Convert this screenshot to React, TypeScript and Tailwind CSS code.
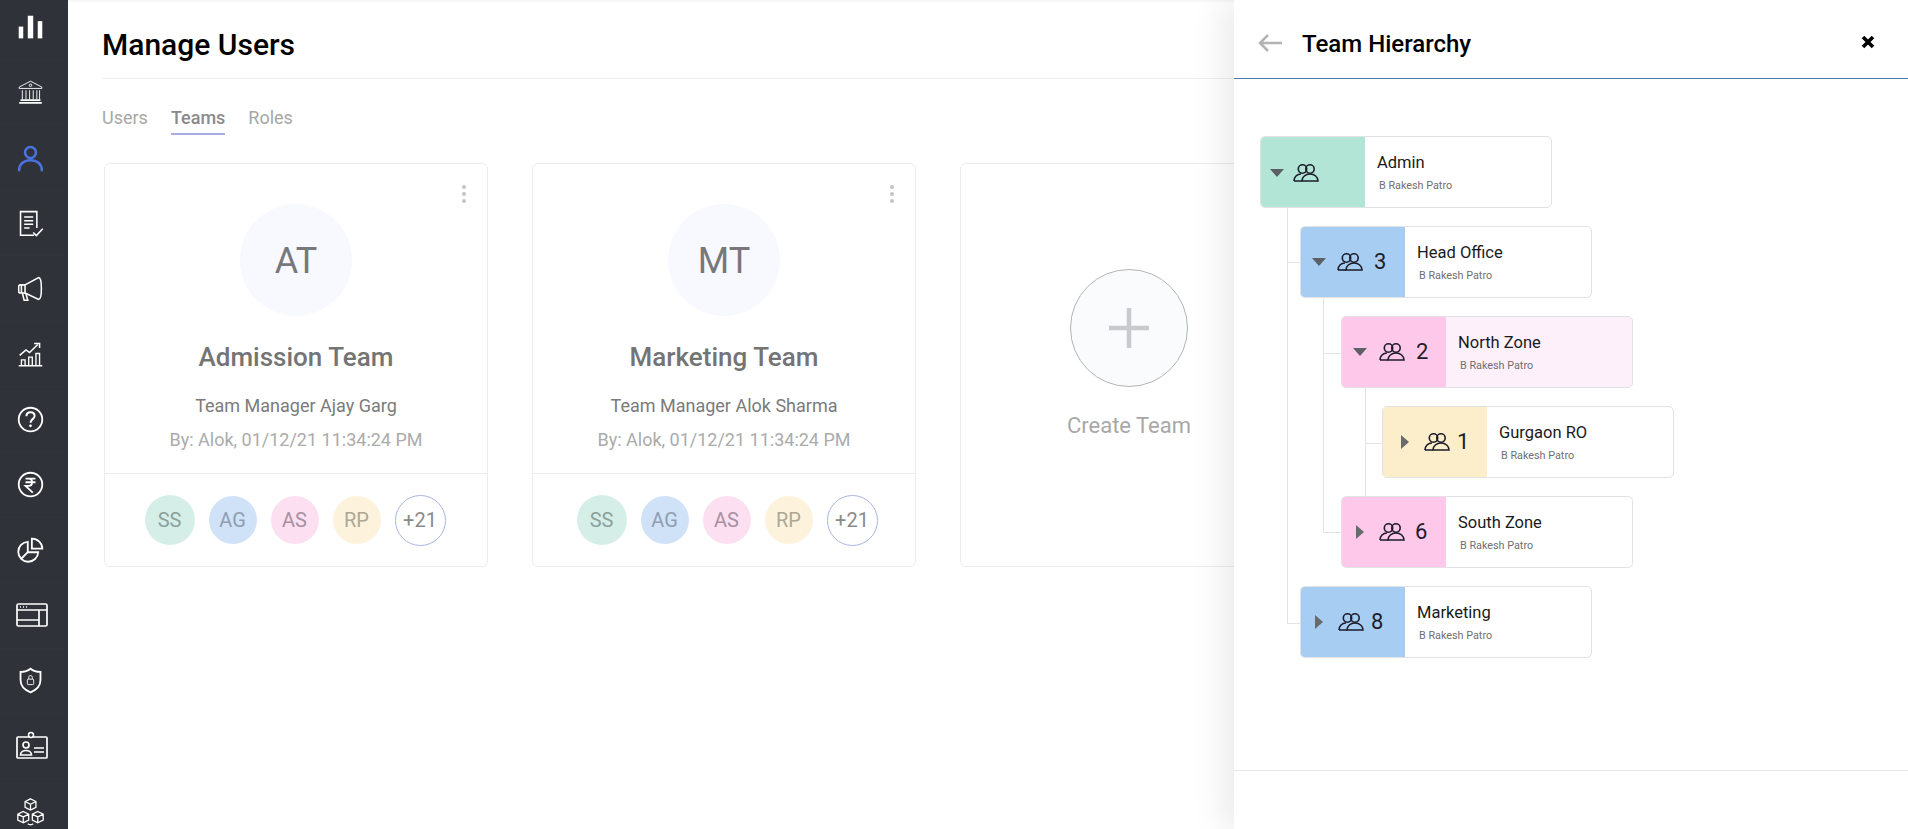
import type { ReactNode } from "react";

// Sidebar icons, all drawn on a 32 box
const sideIcons: ReactNode[] = [
  <>
    <rect x="3" y="15" width="5" height="13" fill="#fff" stroke="none" />
    <rect x="13" y="3" width="6" height="25" fill="#fff" stroke="none" />
    <rect x="24" y="9" width="5" height="19" fill="#fff" stroke="none" />
  </>,
  <>
    <path d="M16 3.5 28.5 10v1.5h-25V10z" />
    <circle cx="16" cy="8" r="1.4" />
    <path d="M7 13.5v10M11 13.5v10M15 13.5v10M19 13.5v10M23 13.5v10M26 13.5v10" />
    <path d="M5 24.5h22M3.5 27.5h25" strokeWidth="2" />
  </>,
  <>
    <circle cx="16" cy="10.500" r="6" strokeWidth="2.800" />
    <path d="M3.500 30c0-7 5.500-11 12.500-11s12.500 4 12.500 11" strokeWidth="2.800" strokeLinecap="round" />
  </>,
  <>
    <path d="M20 30H5V4h18v18" strokeWidth="1.700" />
    <path d="M9 10h10M9 14h10M9 18h10M9 22h6" strokeWidth="1.700" />
    <path d="m19 27 3.500 3.500L29.500 23" strokeWidth="1.700" />
  </>,
  <>
    <path d="M10 12 25 4c2 0 3 5 3 12s-1 12-3 12L10 21z" strokeWidth="1.700" />
    <path d="M10 12H5a2 2 0 0 0-2 2v5a2 2 0 0 0 2 2h5" strokeWidth="1.700" />
    <path d="M6 12v9M7 21l2 8h4l-2-7" strokeWidth="1.700" />
  </>,
  <>
    <path d="M3 29.500h26" strokeWidth="1.700" />
    <path d="M6 29v-6h4v6M14 29v-9h4v9M22 29V16h4v13" strokeWidth="1.500" />
    <path d="m4 18 7-6 4 3 9-9" strokeWidth="1.700" />
    <path d="M20 5h6v5" strokeWidth="1.700" />
  </>,
  <>
    <circle cx="16" cy="16" r="13" strokeWidth="2" />
    <path d="M11.500 12.500c0-2.800 2-4.500 4.500-4.500s4.500 1.600 4.500 4c0 3.600-4.500 3.600-4.500 7.500" strokeWidth="2.200" />
    <circle cx="16" cy="23" r="1.500" fill="#fff" stroke="none" />
  </>,
  <>
    <circle cx="16" cy="16" r="13" strokeWidth="2" />
    <path d="M10.500 9.500h11M10.500 13.500h11M11 9.500h3c5 0 5 8 0 8h-3.500l8 7.500" strokeWidth="2" />
  </>,
  <>
    <path d="M13 7.500a11 11 0 1 0 11.500 11.500H13z" strokeWidth="2" />
    <path d="M17.500 4v11h11.500C29 9 24 4 17.500 4z" strokeWidth="2" />
    <path d="M13 19 5.500 26.500" strokeWidth="2" />
  </>,
  <>
    <rect x="1" y="5" width="30" height="22" rx="1.500" strokeWidth="1.700" />
    <path d="M1 11h30M1 21h22M23 11v16" strokeWidth="1.700" />
    <path d="M4 8h1M7 8h1M10 8h1" strokeWidth="1.700" />
  </>,
  <>
    <path d="M16 3c3 2.500 7 3.500 11 3.500v9c0 6-4.500 11-11 13.500C9.500 26.500 5 21.500 5 15.500v-9C9 6.500 13 5.500 16 3z" strokeWidth="2" />
    <rect x="12.500" y="14.500" width="7" height="6" rx="1" strokeWidth="1" />
    <path d="M14 14.500v-2a2 2 0 0 1 4 0v2" strokeWidth="1" />
  </>,
  <>
    <rect x="1" y="7" width="30" height="21" rx="1" strokeWidth="1.700" />
    <circle cx="15" cy="5" r="2.500" fill="#2f3339" strokeWidth="1.500" />
    <circle cx="10" cy="15" r="3" strokeWidth="1.700" />
    <path d="M4.500 25c0-6 11-6 11 0z" strokeWidth="1.700" />
    <path d="M18 18h10M18 22h10" strokeWidth="1.700" />
  </>,
  <>
    <path d="m16 2 6 3v6.500l-6 3-6-3V5zM10 5l6 3 6-3M16 8v6.500" strokeWidth="1.400" />
    <path d="m8 16 6 3v6.500l-6 3-6-3V19zM2 19l6 3 6-3M8 22v6.500" strokeWidth="1.400" />
    <path d="m24 16 6 3v6.500l-6 3-6-3V19zM18 19l6 3 6-3M24 22v6.500" strokeWidth="1.400" />
    <path d="M13 29.500c2 1.500 4 1.500 6 0" strokeWidth="1.400" />
  </>,
];

function SideItem({ index }: { index: number }) {
  const wide = index === 9 || index === 11;
  return (
    <div
      className={`flex shrink-0 items-center justify-center border-b border-[#31353b] pr-2 ${
        index === 0 ? "h-[60px] pb-[5px]" : "h-[65.4px]"
      }`}
    >
      <svg
        viewBox="0 0 32 32"
        fill="none"
        stroke="currentColor"
        className={`${wide ? "ml-[3px] h-8 w-8" : "h-[29px] w-[29px]"} ${index === 2 ? "text-[#4a72e0]" : "text-white"}`}
      >
        {sideIcons[index]}
      </svg>
    </div>
  );
}

const avatarStyles = [
  { label: "SS", cls: "h-[50px] w-[50px] bg-[#d5efe8] text-[#8c9f9a]" },
  { label: "AG", cls: "h-[48px] w-[48px] bg-[#cfe2f7] text-[#8f9fb1]" },
  { label: "AS", cls: "h-[48px] w-[48px] bg-[#fcdff0] text-[#a98fa1]" },
  { label: "RP", cls: "h-[48px] w-[48px] bg-[#fdf3dc] text-[#aea797]" },
  { label: "+21", cls: "h-[51px] w-[51px] border border-[#a9b5e0] bg-white text-[#8a8a8a]" },
];

function TeamCard({ initials, name, manager, rowClass }: { initials: string; name: string; manager: string; rowClass: string }) {
  return (
    <div className="relative flex h-[404px] w-[384px] shrink-0 flex-col rounded-[6px] border border-[#ececec] bg-white">
      <div className="absolute right-[21px] top-[21px] flex flex-col gap-[3px]">
        <span className="h-1 w-1 rounded-full bg-[#c4c4c4]" />
        <span className="h-1 w-1 rounded-full bg-[#c4c4c4]" />
        <span className="h-1 w-1 rounded-full bg-[#c4c4c4]" />
      </div>
      <div className="flex h-[309px] flex-col items-center pt-[40px]">
        <div className="flex h-[112px] w-[112px] items-center justify-center rounded-full bg-[#f7f9fe] pt-[2px] text-[36px] text-[#77777c]">
          {initials}
        </div>
        <div className="mt-[23px] text-[26px] font-medium leading-[36px] text-[#747474]">{name}</div>
        <div className="mt-[19px] text-[18px] leading-[24px] text-[#7b7b7b]">{manager}</div>
        <div className="mt-[10px] text-[18px] leading-[24px] text-[#ababab]">By: Alok, 01/12/21 11:34:24 PM</div>
      </div>
      <div className={`flex flex-1 items-center justify-center gap-[14px] border-t border-[#ececec] ${rowClass}`}>
        {avatarStyles.map((a) => (
          <div key={a.label} className={`flex shrink-0 items-center justify-center rounded-full text-[20px] ${a.cls}`}>
            {a.label}
          </div>
        ))}
      </div>
    </div>
  );
}

function PeopleIcon({ className }: { className: string }) {
  return (
    <svg viewBox="0 0 26 18" fill="none" stroke="#1c1c2a" strokeWidth="1.600" className={`h-[18px] w-[26px] shrink-0 ${className}`}>
      <circle cx="9.500" cy="5" r="4.200" />
      <circle cx="17" cy="5" r="4.200" />
      <path d="M1 17c0-4 3-7 7-7" />
      <path d="M1 17h8" />
      <path d="M9 17c0-4 3.500-7 8-7s8 3 8 7z" />
    </svg>
  );
}

interface TreeNode {
  name: string;
  count?: string;
  open: boolean;
  indent: string;
  head: string;
  body: string;
  lead: string;
  iconGap: string;
  numGap: string;
}

const nodes: TreeNode[] = [
  { name: "Admin", open: true, indent: "ml-0", head: "bg-[#b2e5d6]", body: "bg-white", lead: "pl-[9px] pt-[1px]", iconGap: "ml-[9px]", numGap: "ml-0" },
  { name: "Head Office", count: "3", open: true, indent: "ml-[40px]", head: "bg-[#a8cdf3]", body: "bg-white", lead: "pl-[11px]", iconGap: "ml-[11px]", numGap: "ml-[11px]" },
  { name: "North Zone", count: "2", open: true, indent: "ml-[81px]", head: "bg-[#fdc8e9]", body: "bg-[#fdf0fa]", lead: "pl-[11px]", iconGap: "ml-[12px]", numGap: "ml-[11px]" },
  { name: "Gurgaon RO", count: "1", open: false, indent: "ml-[122px]", head: "bg-[#fdeecb]", body: "bg-white", lead: "pl-[18px]", iconGap: "ml-[15px]", numGap: "ml-[7px]" },
  { name: "South Zone", count: "6", open: false, indent: "ml-[81px]", head: "bg-[#fdc8e9]", body: "bg-white", lead: "pl-[14px]", iconGap: "ml-[15px]", numGap: "ml-[10px]" },
  { name: "Marketing", count: "8", open: false, indent: "ml-[40px]", head: "bg-[#a8cdf3]", body: "bg-white", lead: "pl-[14px]", iconGap: "ml-[15px]", numGap: "ml-[7px]" },
];

function Node({ node }: { node: TreeNode }) {
  return (
    <div className={`relative flex h-[72px] w-[292px] overflow-hidden rounded-[5px] border border-[#e2e2e2] ${node.indent} ${node.body}`}>
      <div className={`flex w-[104px] shrink-0 items-center ${node.lead} ${node.head}`}>
        {node.open ? (
          <span className="h-0 w-0 shrink-0 border-x-[7px] border-t-[8px] border-x-transparent border-t-[#5c6066]" />
        ) : (
          <span className="h-0 w-0 shrink-0 border-y-[7px] border-l-[8px] border-y-transparent border-l-[#6a6a6a]" />
        )}
        <PeopleIcon className={node.iconGap} />
        {node.count && <span className={`text-[22px] leading-none text-[#1c1c2a] ${node.numGap}`}>{node.count}</span>}
      </div>
      <div className="flex flex-col pl-[12px] pt-[15px]">
        <div className="text-[16.500px] leading-[22px] text-[#1a1a1a]">{node.name}</div>
        <div className="mt-[5px] pl-[2px] text-[10.800px] leading-[14px] text-[#6f6f6f]">B Rakesh Patro</div>
      </div>
    </div>
  );
}

// connector lines between tree nodes
const lines = [
  "left-[53px] top-[128px] h-[416px] w-px",
  "left-[53px] top-[183px] h-px w-[13px]",
  "left-[53px] top-[544px] h-px w-[13px]",
  "left-[89px] top-[218px] h-[235px] w-px",
  "left-[89px] top-[274px] h-px w-[18px]",
  "left-[89px] top-[453px] h-px w-[18px]",
  "left-[131px] top-[308px] h-[109px] w-px",
  "left-[131px] top-[364px] h-px w-[18px]",
];

export default function App() {
  return (
    <div className="relative flex h-[829px] w-full overflow-hidden bg-white font-[Roboto,sans-serif]">
      <aside className="flex h-full w-[68px] shrink-0 flex-col overflow-hidden bg-[#2f3339]">
        {sideIcons.map((_, i) => (
          <SideItem key={i} index={i} />
        ))}
      </aside>

      <main className="flex min-w-0 flex-1 flex-col pl-[34px] shadow-[inset_0_3px_3px_-2px_rgba(0,0,0,0.06)]">
        <div className="flex h-[79px] items-center border-b border-[#eeeeee] pt-[10px]">
          <h1 className="text-[30px] font-medium text-black">Manage Users</h1>
        </div>
        <div className="mt-[25px] flex gap-[23px] text-[18px] leading-[28px] text-[#a7a7a7]">
          <span>Users</span>
          <span className="border-b-2 border-[#a9aee0] pb-[1px] font-medium text-[#8a8a8a]">Teams</span>
          <span>Roles</span>
        </div>
        <div className="mt-[28px] flex gap-[44px] pl-[2px]">
          <TeamCard initials="AT" name="Admission Team" manager="Team Manager Ajay Garg" rowClass="pr-[2px]" />
          <TeamCard initials="MT" name="Marketing Team" manager="Team Manager Alok Sharma" rowClass="pl-[6px]" />
          <div className="flex h-[404px] w-[338px] shrink-0 flex-col items-center rounded-[6px] border border-[#ececec] bg-white pt-[105px]">
            <div className="flex h-[118px] w-[118px] items-center justify-center rounded-full border border-[#b4b4b4] bg-[#f9fbfd]">
              <svg viewBox="0 0 40 40" className="h-10 w-10" stroke="#c8cbce" strokeWidth="4.500">
                <path d="M20 0v40M0 20h40" />
              </svg>
            </div>
            <div className="mt-[25px] text-[22px] leading-[28px] text-[#a8a8a8]">Create Team</div>
          </div>
        </div>
      </main>

      <section className="absolute inset-y-0 right-0 flex w-[674px] flex-col bg-white shadow-[-12px_0_30px_rgba(0,0,0,0.08)]">
        <header className="flex h-[79px] shrink-0 items-center border-b border-[#4f77b0] pl-[24px] pr-[33px] pt-[8px]">
          <svg viewBox="0 0 24 18" fill="none" stroke="#b4b4b4" strokeWidth="2.500" className="h-[18px] w-6 shrink-0">
            <path d="M24 9H2M10 1 2 9l8 8" />
          </svg>
          <h2 className="ml-[20px] flex-1 pt-[2px] text-[24px] font-medium text-black">Team Hierarchy</h2>
          <svg viewBox="0 0 14 14" stroke="#000" strokeWidth="3.600" className="mb-[2px] h-[14px] w-[14px]">
            <path d="M2 2l10 10M12 2 2 12" />
          </svg>
        </header>
        <div className="relative flex flex-1 flex-col gap-[18px] pl-[26px] pt-[57px]">
          {lines.map((l) => (
            <span key={l} className={`absolute bg-[#e3e3e3] ${l}`} />
          ))}
          {nodes.map((n) => (
            <Node key={n.name} node={n} />
          ))}
        </div>
        <div className="h-[59px] shrink-0 border-t border-[#e6e6e6]" />
      </section>
    </div>
  );
}
